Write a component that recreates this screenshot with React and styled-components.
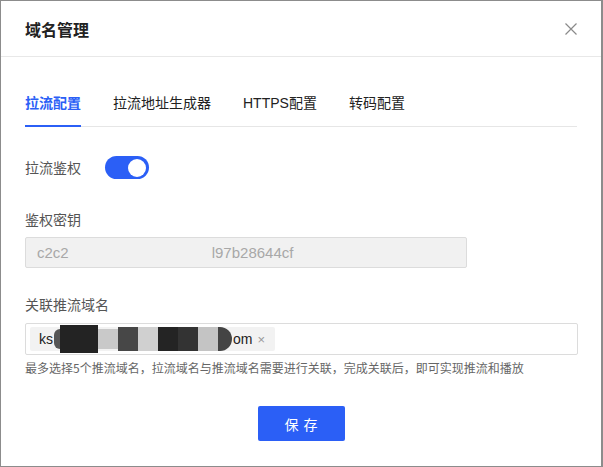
import React from 'react';
import styled, { createGlobalStyle } from 'styled-components';

const GlobalStyle = createGlobalStyle`
  html, body {
    margin: 0;
    padding: 0;
    background: #8c8c8c;
  }
  body {
    font-family: "Liberation Sans", "Noto Sans CJK SC", sans-serif;
  }
`;

const BLUE = '#2b5ff6';

// Styled Components
const Frame = styled.div`
  width: 603px;
  height: 467px;
  box-sizing: border-box;
  padding: 1px 2px 1px 1px;
  display: flex;
  flex-direction: column;
`;

const Modal = styled.div`
  flex: 1;
  background: #fff;
  display: flex;
  flex-direction: column;
`;

const Header = styled.div`
  height: 56px;
  box-sizing: border-box;
  padding: 0 23px 0 24px;
  display: flex;
  align-items: center;
  justify-content: space-between;
  border-bottom: 1px solid #e8e8e8;
`;

const Title = styled.div`
  font-size: 16px;
  font-weight: 600;
  color: #222;
`;

const Close = styled.button`
  border: 0;
  background: none;
  padding: 0;
  width: 14px;
  height: 14px;
  display: flex;
  color: #8a8a8a;
  cursor: pointer;
`;

const Body = styled.div`
  padding: 32px 24px 0 24px;
  display: flex;
  flex-direction: column;
`;

const Tabs = styled.div`
  display: flex;
  gap: 32px;
  border-bottom: 1px solid #e6e6e6;
`;

const Tab = styled.div`
  font-size: 14px;
  line-height: 20px;
  padding: 4px 0 12px;
  color: ${(props) => (props.active ? BLUE : '#222')};
  font-weight: ${(props) => (props.active ? 600 : 400)};
  border-bottom: 2px solid ${(props) => (props.active ? BLUE : 'transparent')};
  margin-bottom: -1px;
`;

const SwitchRow = styled.div`
  display: flex;
  align-items: center;
  gap: 24px;
  margin-top: 29px;
`;

const Label = styled.div`
  font-size: 14px;
  line-height: 20px;
  color: #555;
`;

const Toggle = styled.div`
  width: 44px;
  height: 23px;
  border-radius: 12px;
  background: ${BLUE};
  position: relative;
  &::after {
    content: '';
    position: absolute;
    right: 3px;
    top: 2.5px;
    width: 18px;
    height: 18px;
    border-radius: 50%;
    background: #fff;
  }
`;

const Field = styled.div`
  display: flex;
  flex-direction: column;
  margin-top: ${(props) => props.top}px;
`;

const KeyInput = styled.div`
  width: 442px;
  height: 31px;
  box-sizing: border-box;
  margin-top: 7px;
  background: #f1f1f1;
  border: 1px solid #dcdcdc;
  border-radius: 2px;
  padding: 0 11px;
  display: flex;
  align-items: center;
  font-size: 15px;
  color: #a8a8a8;
`;

const Gap = styled.span`
  display: inline-block;
  width: ${(props) => props.w}px;
`;

const TagInput = styled.div`
  width: 553px;
  height: 32px;
  box-sizing: border-box;
  margin-top: 8px;
  border: 1px solid #dcdcdc;
  border-radius: 2px;
  padding: 3px 4px;
  display: flex;
  align-items: center;
`;

const Tag = styled.div`
  height: 24px;
  width: 245px;
  box-sizing: border-box;
  background: #f2f2f2;
  border-radius: 2px;
  padding: 0 4px 0 9px;
  display: flex;
  align-items: center;
  font-size: 14px;
  color: #222;
`;

const Redacted = styled.div`
  display: flex;
  align-items: center;
  height: 24px;
  margin: 0 1px;
`;

const Blot = styled.span`
  display: block;
  width: ${(props) => props.w}px;
  height: ${(props) => props.h || 24}px;
  background: ${(props) => props.c};
  border-radius: ${(props) => props.r || 0};
`;

const TagClose = styled.span`
  margin-left: 5px;
  color: #999;
  font-size: 13px;
`;

const Hint = styled.div`
  margin-top: 5px;
  font-size: 12px;
  line-height: 16px;
  color: #666;
  font-family: "Noto Sans CJK SC", sans-serif;
`;

const Footer = styled.div`
  display: flex;
  justify-content: center;
  margin-top: 30px;
`;

const SaveButton = styled.button`
  width: 87px;
  height: 35px;
  border: 0;
  border-radius: 2px;
  background: ${BLUE};
  color: #fff;
  font-size: 14px;
  letter-spacing: 5px;
  text-indent: 5px;
  font-family: "Noto Sans CJK SC", sans-serif;
  cursor: pointer;
`;

function CloseIcon() {
  return (
    <svg width="14" height="14" viewBox="0 0 14 14" fill="none">
      <path d="M1.5 1.5 L12.5 12.5 M12.5 1.5 L1.5 12.5" stroke="currentColor" strokeWidth="1.2" />
    </svg>
  );
}

const tabs = ['拉流配置', '拉流地址生成器', 'HTTPS配置', '转码配置'];

export default function App() {
  return (
    <>
      <GlobalStyle />
      <Frame>
        <Modal>
          <Header>
            <Title>域名管理</Title>
            <Close aria-label="关闭">
              <CloseIcon />
            </Close>
          </Header>
          <Body>
            <Tabs>
              {tabs.map((t, i) => (
                <Tab key={t} active={i === 0}>
                  {t}
                </Tab>
              ))}
            </Tabs>

            <SwitchRow>
              <Label>拉流鉴权</Label>
              <Toggle />
            </SwitchRow>

            <Field top={31}>
              <Label>鉴权密钥</Label>
              <KeyInput>
                c2c2
                <Gap w={143} />
                l97b28644cf
              </KeyInput>
            </Field>

            <Field top={27}>
              <Label>关联推流域名</Label>
              <TagInput>
                <Tag>
                  ks
                  <Redacted>
                    <Blot w={6} c="#555" r="6px 0 0 6px" h={20} />
                    <Blot w={38} c="#232323" h={28} />
                    <Blot w={20} c="#c9c9c9" h={20} />
                    <Blot w={20} c="#474747" />
                    <Blot w={20} c="#d0d0d0" />
                    <Blot w={20} c="#242424" />
                    <Blot w={20} c="#333" />
                    <Blot w={20} c="#c4c4c4" />
                    <Blot w={14} c="#444" r="0 12px 12px 0" />
                  </Redacted>
                  om
                  <TagClose>×</TagClose>
                </Tag>
              </TagInput>
              <Hint>
                最多选择5个推流域名，拉流域名与推流域名需要进行关联，完成关联后，即可实现推流和播放
              </Hint>
            </Field>

            <Footer>
              <SaveButton>保存</SaveButton>
            </Footer>
          </Body>
        </Modal>
      </Frame>
    </>
  );
}
